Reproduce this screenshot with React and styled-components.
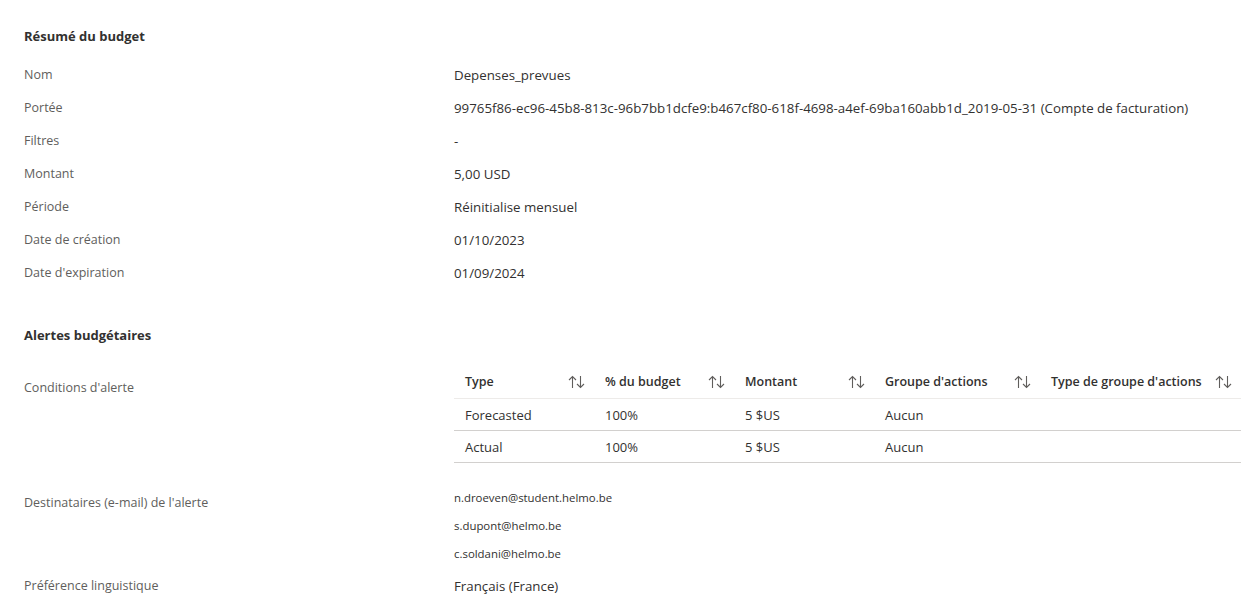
import React from 'react'
import styled, { createGlobalStyle } from 'styled-components'

const GlobalStyle = createGlobalStyle`
  body {
    margin: 0;
    background: #ffffff;
    font-family: 'Open Sans', 'Noto Sans', sans-serif;
    color: #323130;
  }
`

const Page = styled.div`
  padding: 26px 4px 0 24px;
  width: 1245px;
  box-sizing: border-box;
`

const SectionTitle = styled.h2`
  margin: ${p => p.top || 0}px 0 0 0;
  font-size: 13px;
  font-weight: 700;
  line-height: 20px;
  color: #323130;
`

const Rows = styled.div`
  margin-top: ${p => p.top || 0}px;
`

const Row = styled.div`
  display: grid;
  grid-template-columns: 430px 1fr;
  align-items: ${p => (p.top ? 'start' : 'center')};
  min-height: 33px;
`

const Label = styled.div`
  font-size: 12.5px;
  line-height: 18px;
  color: #605e5c;
  padding-top: ${p => p.pad || 0}px;
  margin-top: 1px;
`

const Value = styled.div`
  font-size: 13.3px;
  line-height: 18px;
  color: #323130;
  white-space: nowrap;
`

const Table = styled.div`
  display: grid;
  grid-template-columns: 140px 140px 140px 166px 1fr;
`

const HeadCell = styled.div`
  display: flex;
  align-items: center;
  justify-content: space-between;
  height: 33px;
  padding: 0 9px 0 11px;
  font-size: 12.5px;
  font-weight: 600;
  color: #323130;
  border-bottom: 1px solid #edebe9;
  white-space: nowrap;
`

const Cell = styled.div`
  display: flex;
  align-items: center;
  height: 31px;
  padding: 0 11px;
  font-size: 13px;
  color: #323130;
  border-bottom: 1px solid #d2d0ce;
`

const Mails = styled.div`
  display: flex;
  flex-direction: column;
`

const Mail = styled.div`
  height: 28px;
  line-height: 28px;
  font-size: 11.4px;
  color: #323130;
`

const SortIcon = () => (
  <svg width="17" height="14" viewBox="0 0 17 14" fill="none" stroke="#605e5c" strokeWidth="1.1">
    <path d="M4.5 1.5V13M1 5L4.5 1.5L8 5" />
    <path d="M12.5 1V12.5M9 9L12.5 12.5L16 9" />
  </svg>
)

const summary = [
  ['Nom', 'Depenses_prevues'],
  ['Portée', '99765f86-ec96-45b8-813c-96b7bb1dcfe9:b467cf80-618f-4698-a4ef-69ba160abb1d_2019-05-31 (Compte de facturation)'],
  ['Filtres', '-'],
  ['Montant', '5,00 USD'],
  ['Période', 'Réinitialise mensuel'],
  ['Date de création', '01/10/2023'],
  ["Date d'expiration", '01/09/2024'],
]

const headers = ['Type', '% du budget', 'Montant', "Groupe d'actions", "Type de groupe d'actions"]

const alerts = [
  ['Forecasted', '100%', '5 $US', 'Aucun', ''],
  ['Actual', '100%', '5 $US', 'Aucun', ''],
]

const mails = ['n.droeven@student.helmo.be', 's.dupont@helmo.be', 'c.soldani@helmo.be']

export default function App() {
  return (
    <Page>
      <GlobalStyle />
      <SectionTitle>Résumé du budget</SectionTitle>
      <Rows top={12}>
        {summary.map(([k, v]) => (
          <Row key={k}>
            <Label>{k}</Label>
            <Value>{v}</Value>
          </Row>
        ))}
      </Rows>

      <SectionTitle top={36}>Alertes budgétaires</SectionTitle>
      <Rows top={20}>
        <Row top>
          <Label pad={13}>Conditions d'alerte</Label>
          <Table>
            {headers.map(h => (
              <HeadCell key={h}>
                {h}
                <SortIcon />
              </HeadCell>
            ))}
            {alerts.map((r, i) =>
              r.map((c, j) => <Cell key={i + '-' + j}>{c}</Cell>)
            )}
          </Table>
        </Row>
      </Rows>
      <Rows top={21}>
        <Row top>
          <Label pad={9}>Destinataires (e-mail) de l'alerte</Label>
          <Mails>
            {mails.map(m => <Mail key={m}>{m}</Mail>)}
          </Mails>
        </Row>
      </Rows>
      <Rows top={1}>
        <Row>
          <Label>Préférence linguistique</Label>
          <Value>Français (France)</Value>
        </Row>
      </Rows>
    </Page>
  )
}
